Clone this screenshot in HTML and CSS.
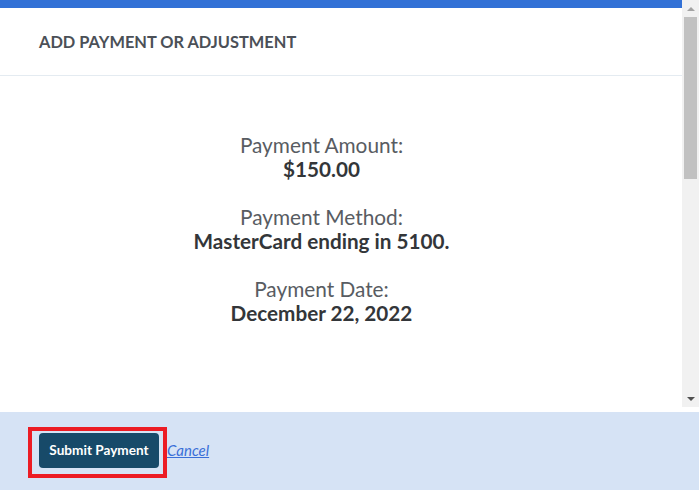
FILE: index.html
```html
<!DOCTYPE html>
<html>
<head>
<meta charset="utf-8">
<link rel="stylesheet" href="styles.css">
</head>
<body>
<div class="modal">
  <div class="scroller">
    <div class="pane">
      <div class="topbar"></div>
      <div class="header">
        <h2 class="title">ADD PAYMENT OR ADJUSTMENT</h2>
      </div>
      <div class="content">
        <div class="group">
          <div class="label">Payment Amount:</div>
          <div class="value">$150.00</div>
        </div>
        <div class="group">
          <div class="label">Payment Method:</div>
          <div class="value">MasterCard ending in 5100.</div>
        </div>
        <div class="group">
          <div class="label">Payment Date:</div>
          <div class="value">December 22, 2022</div>
        </div>
      </div>
    </div>
    <div class="scrollbar">
      <div class="sb-btn"><span class="arrow-up"></span></div>
      <div class="sb-track"><div class="sb-thumb"></div></div>
      <div class="sb-btn"><span class="arrow-down"></span></div>
    </div>
  </div>
  <div class="gap"></div>
  <div class="footer">
    <button class="submit">Submit Payment</button>
    <a class="cancel" href="#">Cancel</a>
    <div class="highlight"></div>
  </div>
</div>
</body>
</html>
```
FILE: styles.css
```css
html, body {
  margin: 0;
  padding: 0;
  background: #fff;
  font-family: Lato, "Open Sans", sans-serif;
}
.modal {
  width: 699px;
  height: 490px;
  display: flex;
  flex-direction: column;
  overflow: hidden;
}
.scroller {
  height: 407px;
  flex: none;
  display: flex;
}
.pane {
  flex: 1;
  overflow: hidden;
}
.scrollbar {
  width: 17px;
  flex: none;
  background: #f1f1f1;
  display: flex;
  flex-direction: column;
}
.sb-btn {
  height: 17px;
  flex: none;
  display: flex;
  align-items: center;
  justify-content: center;
}
.arrow-up {
  width: 0;
  height: 0;
  border-left: 4px solid transparent;
  border-right: 4px solid transparent;
  border-bottom: 4px solid #a3a3a3;
}
.arrow-down {
  width: 0;
  height: 0;
  border-left: 4px solid transparent;
  border-right: 4px solid transparent;
  border-top: 4px solid #505050;
}
.sb-track {
  flex: 1;
  padding: 0 2px;
}
.sb-thumb {
  height: 162px;
  background: #c1c1c1;
}
.topbar {
  height: 8px;
  background: #3271d6;
}
.header {
  padding: 24px 39px 23px;
  border-bottom: 1px solid #e4ebf1;
}
.title {
  margin: 0;
  font-size: 16.4px;
  line-height: 20px;
  font-weight: 700;
  color: #4b5057;
}
.content {
  padding: 57px 39px 0 0;
  display: flex;
  flex-direction: column;
  align-items: center;
  gap: 24px;
  text-align: center;
}
.label {
  font-size: 20.8px;
  line-height: 24px;
  color: #585c62;
}
.value {
  font-size: 20.7px;
  line-height: 24px;
  font-weight: 700;
  color: #333639;
}
.gap {
  height: 5px;
  flex: none;
}
.footer {
  position: relative;
  flex: 1;
  background: #d6e3f5;
  display: flex;
  align-items: center;
  padding-left: 39px;
  padding-bottom: 2px;
}
.submit {
  height: 35px;
  width: 120px;
  padding: 0;
  border: none;
  border-radius: 4px;
  background: #174a69;
  color: #fff;
  font-family: Lato, sans-serif;
  font-weight: 700;
  font-size: 13.6px;
}
.cancel {
  margin-left: 8px;
  font-size: 15px;
  font-style: italic;
  color: #3a6fd8;
  text-decoration: underline;
}
.highlight {
  position: absolute;
  left: 28px;
  top: 15px;
  width: 131px;
  height: 43px;
  border: 4px solid #ec1c24;
}
```
